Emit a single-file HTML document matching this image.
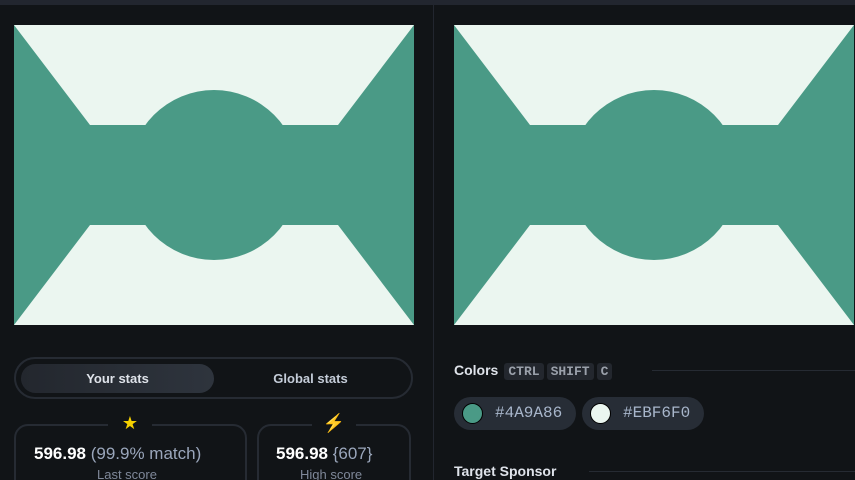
<!DOCTYPE html><html style="width:855px;height:480px;overflow:hidden"><head><style>
body{margin:0;width:855px;height:480px;overflow:hidden;background:#111417;font-family:"Liberation Sans",sans-serif;position:relative}
.top{position:absolute;left:0;top:0;width:855px;height:5px;background:#22262f}
.div{position:absolute;left:433px;top:5px;width:1px;height:475px;background:#22262f}
svg.art{position:absolute;top:25px}
.tabs{position:absolute;left:14px;top:357px;width:399px;height:42px;border:2px solid #262b33;border-radius:22px;box-sizing:border-box}
.tab{position:absolute;top:5px;height:29px;border-radius:15px;line-height:29px;text-align:center;font-size:13px;font-weight:bold;color:#dfe3ea}
.card{position:absolute;top:424px;height:70px;border:2px solid #262b33;border-radius:14px;box-sizing:border-box}
.ic{position:absolute;top:413px;width:44px;height:20px;background:#111417;text-align:center;font-size:18px;color:#f5d000;line-height:20px}
.num{position:absolute;top:444px;font-size:17px;color:#9aa6bb;white-space:nowrap}
.num b{color:#fff;font-weight:900}
.lab{position:absolute;top:467px;font-size:13px;color:#7f8899}
.k{display:inline-block;background:#23272e;color:#9aa0aa;font-family:"Liberation Mono",monospace;font-size:13px;font-weight:bold;padding:1px 4px;border-radius:3px;margin-left:3px}
.chip{position:absolute;top:397px;height:33px;border-radius:17px;background:#272d36;color:#a8b6cb;font-family:"Liberation Mono",monospace;font-size:16px;line-height:33px}
.dot{position:absolute;left:8px;top:6px;width:21px;height:21px;border-radius:50%;border:1px solid #000;box-sizing:border-box}
</style></head><body>
<div class="top"></div><div class="div"></div>
<svg class="art" style="left:14px" width="400" height="300"><rect width="400" height="300" fill="#EBF6F0"/><polygon points="0,0 76,100 324,100 400,0 400,300 324,200 76,200 0,300" fill="#4A9A86"/><circle cx="200" cy="150" r="85" fill="#4A9A86"/></svg>
<svg class="art" style="left:454px" width="400" height="300"><rect width="400" height="300" fill="#EBF6F0"/><polygon points="0,0 76,100 324,100 400,0 400,300 324,200 76,200 0,300" fill="#4A9A86"/><circle cx="200" cy="150" r="85" fill="#4A9A86"/></svg>
<div class="tabs"><div class="tab" style="left:5px;width:193px;background:linear-gradient(90deg,#23272e,#2e343d)">Your stats</div><div class="tab" style="left:198px;width:193px;color:#c4ccd8">Global stats</div></div>
<div class="card" style="left:14px;width:233px"></div>
<div class="card" style="left:257px;width:154px"></div>
<div class="ic" style="left:108px">★</div>
<div class="ic" style="left:312px">⚡</div>
<div class="num" style="left:34px"><b>596.98</b> (99.9% match)</div>
<div class="num" style="left:276px"><b>596.98</b> {607}</div>
<div class="lab" style="left:97px">Last score</div>
<div class="lab" style="left:300px">High score</div>
<div style="position:absolute;left:454px;top:362px;font-size:14px;font-weight:bold;color:#dfe3ea">Colors<span class="k" style="margin-left:6px">CTRL</span><span class="k">SHIFT</span><span class="k">C</span></div>
<div style="position:absolute;left:652px;top:370px;width:203px;height:1px;background:#262b33"></div>
<div class="chip" style="left:454px;width:122px"><div class="dot" style="background:#4A9A86"></div><span style="margin-left:41px">#4A9A86</span></div>
<div class="chip" style="left:582px;width:122px"><div class="dot" style="background:#EBF6F0"></div><span style="margin-left:41px">#EBF6F0</span></div>
<div style="position:absolute;left:454px;top:463px;font-size:14px;font-weight:bold;color:#dfe3ea">Target Sponsor</div>
<div style="position:absolute;left:589px;top:471px;width:266px;height:1px;background:#262b33"></div>
</body></html>
